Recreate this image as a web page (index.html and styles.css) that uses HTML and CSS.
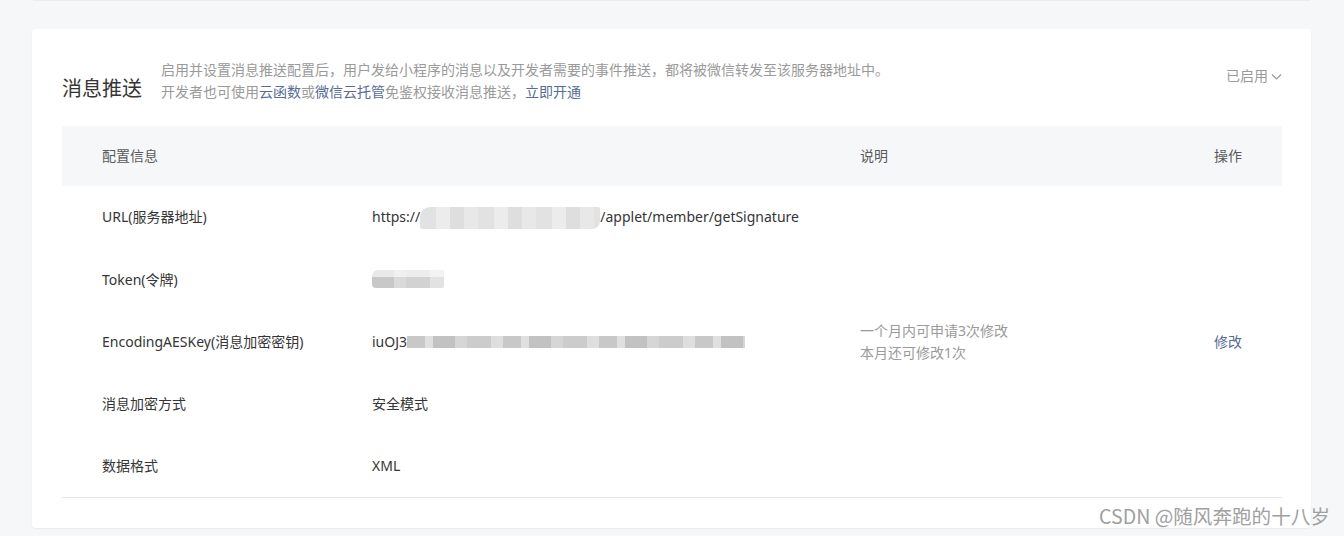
FILE: index.html
```html
<!DOCTYPE html>
<html lang="zh-CN">
<head>
<meta charset="utf-8">
<title>消息推送</title>
<link rel="stylesheet" href="styles.css">
</head>
<body>
<div class="page">
  <div class="prev-card"></div>
  <section class="card">
    <header class="card-head">
      <h2 class="title">消息推送</h2>
      <div class="desc">
        <p>启用并设置消息推送配置后，用户发给小程序的消息以及开发者需要的事件推送，都将被微信转发至该服务器地址中。</p>
        <p>开发者也可使用<a class="link">云函数</a>或<a class="link">微信云托管</a>免鉴权接收消息推送，<a class="link">立即开通</a></p>
      </div>
      <div class="status">已启用<svg class="chev" width="11" height="11" viewBox="0 0 11 11"><path d="M1 3.5 L5.5 8 L10 3.5" fill="none" stroke="#9a9a9a" stroke-width="1.2"/></svg></div>
    </header>
    <div class="table">
      <div class="row head">
        <div>配置信息</div><div></div><div>说明</div><div>操作</div>
      </div>
      <div class="row">
        <div>URL(服务器地址)</div>
        <div>https://<span class="mask mask-url"></span>/applet/member/getSignature</div>
        <div></div><div></div>
      </div>
      <div class="row">
        <div>Token(令牌)</div>
        <div><span class="mask mask-token"></span></div>
        <div></div><div></div>
      </div>
      <div class="row">
        <div>EncodingAESKey(消息加密密钥)</div>
        <div>iuOJ3<span class="mask mask-key"></span></div>
        <div class="tips"><p>一个月内可申请3次修改</p><p>本月还可修改1次</p></div>
        <div><a class="link">修改</a></div>
      </div>
      <div class="row">
        <div>消息加密方式</div>
        <div>安全模式</div>
        <div></div><div></div>
      </div>
      <div class="row last">
        <div>数据格式</div>
        <div>XML</div>
        <div></div><div></div>
      </div>
    </div>
  </section>
  <div class="watermark">CSDN @随风奔跑的十八岁</div>
</div>
</body>
</html>
```
FILE: styles.css
```css
* { box-sizing: border-box; }
html, body {
  margin: 0;
  padding: 0;
  background: #f6f7f9;
  font-family: "Noto Sans", "Noto Sans CJK SC", sans-serif;
  color: #353535;
}
p { margin: 0; }
.page {
  position: relative;
  width: 1344px;
  height: 536px;
  overflow: hidden;
}
.prev-card {
  height: 1px;
  margin: 0 34px 0 33px;
  background: #ececef;
}
.card {
  margin: 28px 33px 0 32px;
  background: #fff;
  border-radius: 4px;
  box-shadow: 0 1px 2px rgba(0,0,0,0.06);
  padding: 30px 29px 30px 30px;
}
.card-head {
  display: flex;
  align-items: flex-end;
}
.title {
  margin: 0;
  font-size: 20px;
  font-weight: normal;
  line-height: 28px;
  color: #353535;
  white-space: nowrap;
}
.desc {
  margin-left: 19px;
  flex: 1;
  font-size: 14px;
  line-height: 22px;
  color: #9a9a9a;
}
.link {
  color: #576b95;
  text-decoration: none;
  cursor: pointer;
}
.status {
  align-self: flex-start;
  margin-top: 6px;
  font-size: 14px;
  line-height: 22px;
  color: #9a9a9a;
  display: flex;
  align-items: center;
}
.chev { margin-left: 3px; }
.table {
  margin-top: 23px;
  font-size: 14px;
}
.row {
  display: grid;
  grid-template-columns: 270px 488px 1fr 28px;
  align-items: center;
  padding: 0 40px;
  height: 62.4px;
  line-height: 22px;
}
.row.head {
  height: 60px;
  background: #f6f7f9;
  color: #5a5a5a;
}
.row.last { border-bottom: 1px solid #e7e7eb; }
.tips {
  color: #9a9a9a;
}
.row > div { white-space: nowrap; }
.mask {
  display: inline-block;
  vertical-align: middle;
}
.mask-url {
  width: 180px;
  height: 22px;
  border-radius: 10px 2px 8px 2px;
  background:
    repeating-linear-gradient(90deg, #e2e2e2 0 16px, #ececec 16px 30px, #dedede 30px 44px, #e8e8e8 44px 58px);
}
.mask-token {
  width: 72px;
  height: 18px;
  margin-top: -4px;
  border-radius: 6px 2px 2px 4px;
  background:
    linear-gradient(180deg, rgba(255,255,255,0.6) 0 40%, rgba(255,255,255,0) 40%),
    repeating-linear-gradient(90deg, #c8c8c8 0 22px, #dadada 22px 34px, #d2d2d2 34px 58px, #e2e2e2 58px 72px);
}
.mask-key {
  width: 338px;
  height: 12px;
  margin-top: -2px;
  background:
    repeating-linear-gradient(90deg, #c8c8c8 0 18px, #e0e0e0 18px 26px, #c2c2c2 26px 48px, #d6d6d6 48px 60px, #cccccc 60px 84px, #dedede 84px 96px);
}
.watermark {
  position: absolute;
  right: 14px;
  bottom: 6px;
  font-size: 19.6px;
  color: #a0a0a0;
  text-shadow: 0 0 1px #ffffff;
  font-family: "Noto Sans CJK SC", sans-serif;
  white-space: nowrap;
}
```
